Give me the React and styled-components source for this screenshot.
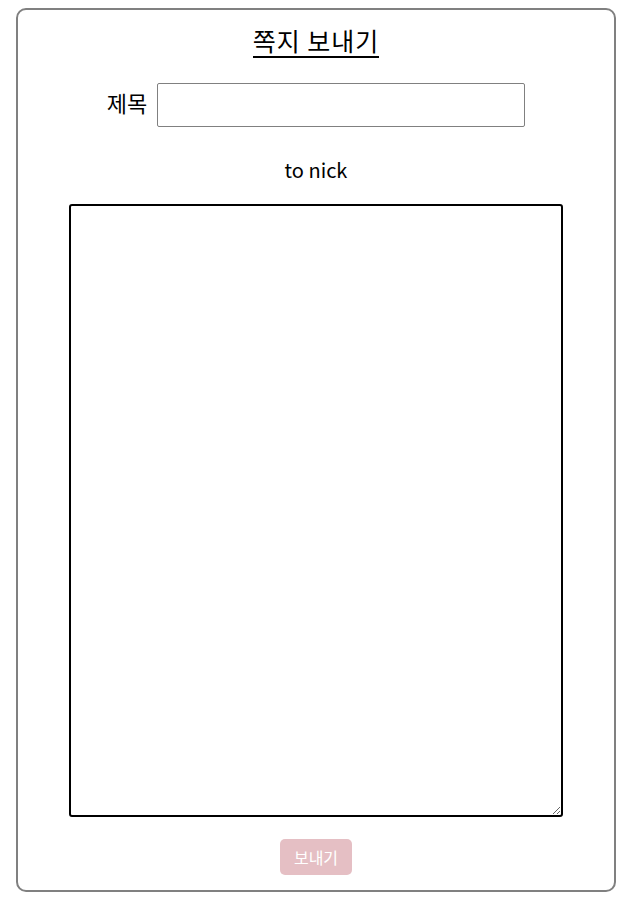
import React from 'react';
import styled, { createGlobalStyle } from 'styled-components';

const GlobalStyle = createGlobalStyle`
  body {
    margin: 8px;
    background: #fff;
    font-family: "Noto Sans CJK KR", "Noto Sans", sans-serif;
  }
  * { box-sizing: border-box; }
`;

const Card = styled.div`
  width: 600px;
  height: 884px;
  margin: 0 8px;
  border: 2px solid #808080;
  border-radius: 10px;
  padding: 15px 0 15px;
  display: flex;
  flex-direction: column;
  align-items: center;
`;

const Title = styled.h2`
  margin: 0;
  font-size: 25px;
  font-weight: 400;
  letter-spacing: 1px;
  line-height: 31px;
  color: #000;
  border-bottom: 2px solid #000;
`;

const Row = styled.div`
  margin-top: 25px;
  display: flex;
  align-items: center;
  gap: 10px;
`;

const Label = styled.label`
  font-size: 22px;
  line-height: 28px;
  color: #000;
  margin-bottom: 6px;
`;

const Input = styled.input`
  width: 368px;
  height: 44px;
  border: 1px solid #808080;
  border-radius: 2px;
  padding: 0 8px;
  font-size: 16px;
  font-family: inherit;
`;

const To = styled.div`
  margin-top: 29px;
  font-size: 20px;
  line-height: 28px;
  color: #000;
`;

const Message = styled.textarea`
  margin-top: 20px;
  width: 494px;
  height: 613px;
  border: 2px solid #000;
  border-radius: 3px;
  outline: none;
  padding: 6px;
  font-size: 16px;
  font-family: inherit;
  caret-color: #000;
`;

const SendButton = styled.button`
  margin-top: 22px;
  width: 72px;
  height: 36px;
  border: none;
  border-radius: 5px;
  background: ${(p) => (p.disabled ? '#e5bfc4' : '#d9808b')};
  color: #fff;
  font-size: 16px;
  font-family: inherit;
`;

export default function App() {
  return (
    <>
      <GlobalStyle />
      <Card>
        <Title>쪽지 보내기</Title>
        <Row>
          <Label htmlFor="title">제목</Label>
          <Input id="title" type="text" />
        </Row>
        <To>to nick</To>
        <Message autoFocus />
        <SendButton disabled>보내기</SendButton>
      </Card>
    </>
  );
}
